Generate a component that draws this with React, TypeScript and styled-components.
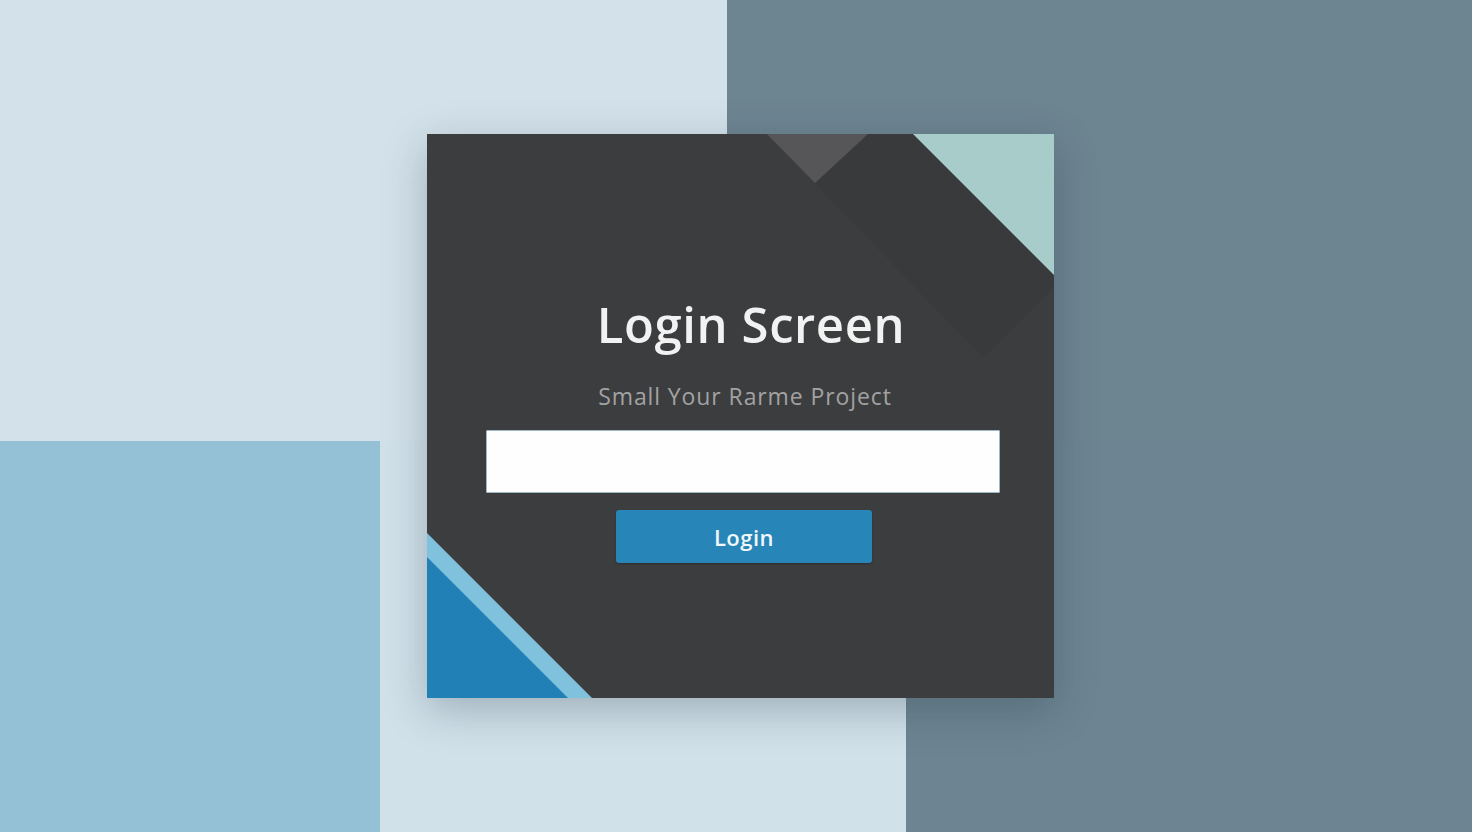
import React from "react";
import styled, { createGlobalStyle } from "styled-components";

const GlobalStyle = createGlobalStyle`
  html, body {
    margin: 0;
    padding: 0;
    width: 100%;
    height: 100%;
    overflow: hidden;
  }
  body {
    font-family: "Open Sans", "Noto Sans", sans-serif;
  }
`;

const Page = styled.div`
  position: relative;
  width: 1472px;
  height: 832px;
  display: grid;
  grid-template-rows: 441px 1fr;
`;

const Band = styled.div`
  display: flex;
`;

const Panel = styled.div<{ $width?: number; $color: string }>`
  flex: ${(p) => (p.$width ? `0 0 ${p.$width}px` : "1 1 auto")};
  background: ${(p) => p.$color};
`;

const Card = styled.div`
  position: absolute;
  left: 427px;
  top: 134px;
  width: 627px;
  height: 564px;
  background: #3c3d3f;
  box-shadow: 0 12px 40px rgba(30, 45, 60, 0.28);
  overflow: hidden;
`;

const Decor = styled.svg`
  position: absolute;
  inset: 0;
  width: 100%;
  height: 100%;
`;

const Content = styled.div`
  position: relative;
  display: flex;
  flex-direction: column;
  align-items: center;
  padding-top: 156px;
`;

const Title = styled.h1`
  margin: 0 0 0 21px;
  font-size: 49px;
  font-weight: 600;
  line-height: 68px;
  color: #f2f2f2;
  letter-spacing: 0.6px;
`;

const Subtitle = styled.p`
  margin: 23px 0 0 9px;
  font-size: 23px;
  line-height: 30px;
  color: #a2a2a2;
  letter-spacing: 0.9px;
`;

const Input = styled.input`
  box-sizing: border-box;
  margin: 19px 0 0 5px;
  width: 514px;
  height: 63px;
  border: 1px solid #9fb8c8;
  border-radius: 1px;
  background: #fefefe;
  outline: none;
`;

const Button = styled.button`
  margin: 17px 0 0 7px;
  width: 256px;
  height: 53px;
  border: none;
  border-radius: 3px;
  background: #2785b8;
  color: #f2f7fa;
  font-family: "Open Sans", "Noto Sans", sans-serif;
  font-size: 22px;
  font-weight: 600;
  letter-spacing: 0.5px;
  box-shadow: 0 1px 2px rgba(0, 0, 0, 0.25);
`;

const App: React.FC = () => {
  return (
    <>
      <GlobalStyle />
      <Page>
        <Band>
          <Panel $width={727} $color="#d3e2ea" />
          <Panel $color="#6d8491" />
        </Band>
        <Band>
          <Panel $width={380} $color="#95c1d7" />
          <Panel $width={526} $color="#d1e1ea" />
          <Panel $color="#6d8592" />
        </Band>
        <Card>
          <Decor viewBox="0 0 627 564">
            <polygon points="388,49 437,0 486,0 627,141 627,153 556,224" fill="#393a3c" />
            <polygon points="340,0 441,0 388,49" fill="#565658" />
            <polygon points="486,0 627,0 627,141" fill="#a7ccca" />
            <polygon points="0,399 0,564 165,564" fill="#80c1de" />
            <polygon points="0,423 0,564 141,564" fill="#2180b5" />
          </Decor>
          <Content>
            <Title>Login Screen</Title>
            <Subtitle>Small Your Rarme Project</Subtitle>
            <Input type="text" />
            <Button>Login</Button>
          </Content>
        </Card>
      </Page>
    </>
  );
};

export default App;
